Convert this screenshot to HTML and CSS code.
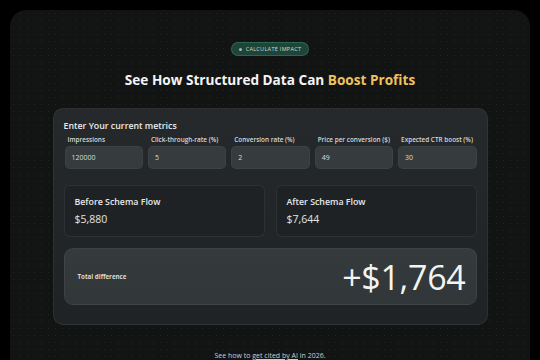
FILE: index.html
```html
<!DOCTYPE html>
<html lang="en">
<head>
<meta charset="utf-8">
<title>Boost Profits Calculator</title>
<link rel="stylesheet" href="styles.css">
</head>
<body>
<main class="panel">
  <div class="badge"><span class="badge-dot"></span>Calculate impact</div>
  <h1 class="title">See How Structured Data Can <span class="accent">Boost Profits</span></h1>
  <section class="card">
    <h2 class="card-title">Enter Your current metrics</h2>
    <div class="fields">
      <label class="field"><span class="field-label">Impressions</span><span class="input">120000</span></label>
      <label class="field"><span class="field-label">Click-through-rate (%)</span><span class="input">5</span></label>
      <label class="field"><span class="field-label">Conversion rate (%)</span><span class="input">2</span></label>
      <label class="field"><span class="field-label">Price per conversion ($)</span><span class="input">49</span></label>
      <label class="field"><span class="field-label">Expected CTR boost (%)</span><span class="input">30</span></label>
    </div>
    <div class="results">
      <div class="result">
        <div class="result-title">Before Schema Flow</div>
        <div class="result-value">$5,880</div>
      </div>
      <div class="result">
        <div class="result-title">After Schema Flow</div>
        <div class="result-value">$7,644</div>
      </div>
    </div>
    <div class="total">
      <span class="total-label">Total difference</span>
      <span class="total-value">+$1,764</span>
    </div>
  </section>
  <p class="footer">See how to <a class="footer-link" href="#">get cited by AI</a> in 2026.</p>
</main>
</body>
</html>
```

FILE: styles.css
```css
* { box-sizing: border-box; }
html, body { margin: 0; padding: 0; }
body {
  width: 540px;
  height: 360px;
  overflow: hidden;
  background: #000;
  font-family: "Open Sans", "Noto Sans", sans-serif;
  color: #e8eaea;
}
.panel {
  margin: 10px 10px 0;
  height: 350px;
  overflow: hidden;
  border-radius: 16px 16px 0 0;
  background-color: #121414;
  background-image: radial-gradient(rgba(255,255,255,0.07) 0.6px, transparent 0.9px);
  background-size: 7px 7px;
  padding-top: 32px;
  display: flex;
  flex-direction: column;
  align-items: center;
}
.badge {
  flex-shrink: 0;
  display: flex;
  align-items: center;
  gap: 4px;
  height: 14px;
  padding: 0 7px 0 7px;
  border-radius: 7px;
  background: #1d4539;
  border: 1px solid rgba(110,190,160,0.25);
  font-size: 5.5px;
  font-weight: 400;
  letter-spacing: 0.3px;
  text-transform: uppercase;
  color: #d0dcd7;
}
.badge-dot {
  width: 3px;
  height: 3px;
  border-radius: 50%;
  background: #9fb8af;
}
.title {
  flex-shrink: 0;
  margin: 14px 0 0;
  font-size: 13.6px;
  line-height: 20px;
  font-weight: 700;
  color: #f4f4f4;
}
.accent { color: #efc15d; }
.card {
  margin-top: 18px;
  width: 435px;
  flex-shrink: 0;
  border-radius: 10px;
  background: linear-gradient(180deg, #25292b 0%, #202325 100%);
  border: 1px solid rgba(255,255,255,0.06);
  padding: 11px 10px 19px;
}
.card-title {
  margin: 0;
  font-size: 8.8px;
  line-height: 12px;
  font-weight: 600;
  color: #e9ecec;
}
.fields {
  margin-top: 3px;
  display: grid;
  grid-template-columns: repeat(5, 1fr);
  gap: 5px;
  padding-left: 1px;
}
.field {
  display: flex;
  flex-direction: column;
  gap: 2px;
}
.field-label {
  padding-left: 3px;
  font-size: 6.4px;
  line-height: 9px;
  font-weight: 600;
  color: #d6dada;
  white-space: nowrap;
}
.input {
  height: 23px;
  border-radius: 5px;
  background: #363c3e;
  border: 1px solid rgba(255,255,255,0.04);
  display: flex;
  align-items: center;
  padding-left: 6px;
  font-size: 7px;
  color: #d8dcdc;
}
.results {
  margin-top: 16px;
  display: grid;
  grid-template-columns: 1fr 1fr;
  gap: 11px;
}
.result {
  height: 52px;
  border-radius: 6px;
  border: 1px solid rgba(255,255,255,0.07);
  background: #1f2224;
  padding: 10px 10px 0;
}
.result-title {
  font-size: 8.8px;
  line-height: 12px;
  font-weight: 600;
  color: #e6e9e9;
}
.result-value {
  margin-top: 5px;
  font-size: 10.5px;
  line-height: 12px;
  color: #e2e5e5;
}
.total {
  margin-top: 11px;
  height: 57px;
  border-radius: 9px;
  background: linear-gradient(180deg, #353a3c 0%, #313638 100%);
  border: 1px solid rgba(255,255,255,0.06);
  display: flex;
  align-items: center;
  justify-content: space-between;
  padding: 0 10px 0 13px;
}
.total-label {
  font-size: 6.2px;
  font-weight: 700;
  color: #d8dcdc;
}
.total-value {
  font-size: 34px;
  line-height: 40px;
  font-weight: 400;
  letter-spacing: -0.3px;
  color: #f2f4f4;
}
.footer {
  flex-shrink: 0;
  margin: 27px 0 0;
  font-size: 7px;
  line-height: 8px;
  color: #c9cccc;
}
.footer-link {
  color: #c9cccc;
  text-decoration: underline;
}
```
